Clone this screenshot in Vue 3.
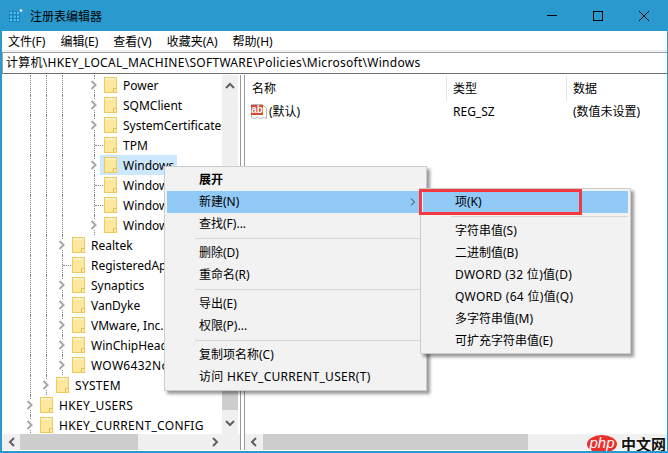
<template>
  <div class="window">
    <!-- title bar -->
    <div class="titlebar">
      <svg class="app-icon" width="14" height="15" viewBox="0 0 14 15">
        <g fill="#4fc3f7" stroke="#0f6fa8" stroke-width="0.6">
          <rect v-for="c in gridCells" :key="c.k" :x="c.x" :y="c.y" width="3" height="3" />
        </g>
        <circle cx="12" cy="2.5" r="2" fill="#bfe9fb" stroke="#0f6fa8" stroke-width="0.6" />
      </svg>
      <span class="title">注册表编辑器</span>
      <div class="controls">
        <svg width="12" height="12" viewBox="0 0 12 12"><path d="M1 5.5h10" stroke="#000" fill="none" /></svg>
        <svg width="12" height="12" viewBox="0 0 12 12"><rect x="1.5" y="1.5" width="9" height="9" stroke="#000" fill="none" /></svg>
        <svg width="12" height="12" viewBox="0 0 12 12"><path d="M1 1l10 10M11 1L1 11" stroke="#000" fill="none" /></svg>
      </div>
    </div>

    <!-- menu -->
    <div class="menubar">
      <span v-for="m in menus" :key="m">{{ m }}</span>
    </div>

    <!-- address -->
    <div class="address">计算机\HKEY_LOCAL_MACHINE\SOFTWARE\Policies\Microsoft\Windows</div>

    <div class="panes">
      <div class="left">
        <div class="left-top">
          <div class="tree">
            <div v-for="row in rows" :key="row.name" class="row">
              <span
                v-for="i in row.depth"
                :key="i"
                class="col"
                :class="{ guide: row.guides.includes(i - 1) }"
              ></span>
              <span class="col line" :class="{ leaf: !row.exp }">
                <svg v-if="row.exp" class="chev" width="8" height="10" viewBox="0 0 8 10">
                  <path d="M1.5 1l4 4-4 4" fill="none" stroke="#a6a6a6" stroke-width="2" />
                </svg>
              </span>
              <span class="node" :class="{ selected: row.selected, wide: row.wide }">
                <svg class="folder" width="13" height="16" viewBox="0 0 13 16">
                  <rect x="0.5" y="0.5" width="12" height="15" fill="#fce79e" stroke="#f0cb5c" />
                  <rect x="1" y="1" width="11" height="2" fill="#fdf0c0" />
                  <path d="M9.5 15.5v-4h3" fill="#fff3c4" stroke="#e8bd45" />
                </svg>
                <span>{{ row.name }}</span>
              </span>
            </div>
          </div>
          <div class="vscroll">
            <svg width="16" height="20" viewBox="0 0 16 20"><path d="M4 13l4-4 4 4" fill="none" stroke="#606060" stroke-width="2" /></svg>
            <div class="vtrack"><div class="vthumb"></div></div>
            <svg width="16" height="20" viewBox="0 0 16 20"><path d="M4 7l4 4 4-4" fill="none" stroke="#606060" stroke-width="2" /></svg>
          </div>
        </div>
        <div class="hscroll">
          <svg width="18" height="16" viewBox="0 0 18 16"><path d="M12 4L8 8l4 4" fill="none" stroke="#606060" stroke-width="2" /></svg>
          <div class="hthumb left-thumb"></div>
          <div class="spacer"></div>
          <svg width="18" height="16" viewBox="0 0 18 16"><path d="M7 4l4 4-4 4" fill="none" stroke="#606060" stroke-width="2" /></svg>
          <div class="corner"></div>
        </div>
      </div>

      <div class="splitter"></div>

      <div class="right">
        <div class="list-head">
          <span class="h-name">名称</span>
          <span class="h-type">类型</span>
          <span class="h-data">数据</span>
        </div>
        <div class="list-row">
          <span class="h-name cell-name">
            <svg width="16" height="17" viewBox="0 0 16 17">
              <path d="M0.5 1.5h11l4 4v10l-3-1-3 1-3-1-3 1-3-1z" fill="#fff" stroke="#b8b8b8" />
              <rect x="0" y="2" width="12" height="10" fill="#d9482b" />
              <text x="6" y="10" class="ab">ab</text>
            </svg>
            (默认)
          </span>
          <span class="h-type">REG_SZ</span>
          <span class="h-data">(数值未设置)</span>
        </div>
        <div class="list-fill"></div>
        <div class="hscroll">
          <svg width="18" height="16" viewBox="0 0 18 16"><path d="M11 4L7 8l4 4" fill="none" stroke="#606060" stroke-width="2" /></svg>
          <div class="hthumb right-thumb"></div>
        </div>
      </div>
    </div>

    <!-- context menu -->
    <div class="menu main-menu">
      <template v-for="(it, i) in mainMenu" :key="i">
        <div v-if="it.sep" class="sep"></div>
        <div v-else class="item" :class="{ active: it.active, bold: it.bold, wide: it.wide }">
          {{ it.text }}
          <svg v-if="it.active" class="sub-arrow" width="6" height="8" viewBox="0 0 6 8">
            <path d="M1 0.5l3.5 3.5L1 7.5" fill="none" stroke="#404040" />
          </svg>
        </div>
      </template>
    </div>

    <div class="menu sub-menu">
      <template v-for="(it, i) in subMenu" :key="i">
        <div v-if="it.sep" class="sep"></div>
        <div v-else class="item" :class="{ active: it.active, wide: it.wide }">{{ it.text }}</div>
      </template>
    </div>
    <div class="red-box"></div>

    <!-- watermark -->
    <div class="watermark">
      <span class="php">php</span>
      <span class="cn">中文网</span>
    </div>
  </div>
</template>

<script setup>
const menus = ["文件(F)", "编辑(E)", "查看(V)", "收藏夹(A)", "帮助(H)"];

const gridCells = [];
for (let y = 0; y < 3; y++) {
  for (let x = 0; x < 3; x++) {
    gridCells.push({ k: `${x}-${y}`, x: 0.5 + x * 3.6, y: 3.5 + y * 3.6 });
  }
}

const deep = [1, 2, 3];
const mid = [1, 2];
const rows = [
  { name: "Power", depth: 5, guides: deep, exp: true },
  { name: "SQMClient", depth: 5, guides: deep, exp: true },
  { name: "SystemCertificates", depth: 5, guides: deep, exp: true },
  { name: "TPM", depth: 5, guides: deep },
  { name: "Windows", depth: 5, guides: deep, exp: true, selected: true },
  { name: "Windows Defender", depth: 5, guides: deep },
  { name: "Windows Firewall", depth: 5, guides: deep },
  { name: "Windows NT", depth: 5, guides: deep, exp: true },
  { name: "Realtek", depth: 3, guides: mid, exp: true },
  { name: "RegisteredApplications", depth: 3, guides: mid },
  { name: "Synaptics", depth: 3, guides: mid, exp: true },
  { name: "VanDyke", depth: 3, guides: mid, exp: true },
  { name: "VMware, Inc.", depth: 3, guides: mid, exp: true },
  { name: "WinChipHead", depth: 3, guides: mid, exp: true },
  { name: "WOW6432Node", depth: 3, guides: mid, exp: true, wide: true },
  { name: "SYSTEM", depth: 2, guides: [1], exp: true, wide: true },
  { name: "HKEY_USERS", depth: 1, guides: [], exp: true, wide: true },
  { name: "HKEY_CURRENT_CONFIG", depth: 1, guides: [], exp: true, wide: true },
];

const mainMenu = [
  { text: "展开", bold: true },
  { text: "新建(N)", active: true },
  { text: "查找(F)..." },
  { sep: true },
  { text: "删除(D)" },
  { text: "重命名(R)" },
  { sep: true },
  { text: "导出(E)" },
  { text: "权限(P)..." },
  { sep: true },
  { text: "复制项名称(C)" },
  { text: "访问 HKEY_CURRENT_USER(T)", wide: true },
];

const subMenu = [
  { text: "项(K)", active: true },
  { sep: true },
  { text: "字符串值(S)" },
  { text: "二进制值(B)" },
  { text: "DWORD (32 位)值(D)", wide: true },
  { text: "QWORD (64 位)值(Q)", wide: true },
  { text: "多字符串值(M)" },
  { text: "可扩充字符串值(E)" },
];
</script>

<style>
html,
body {
  margin: 0;
  background: #fff;
}
</style>

<style scoped>
.window {
  position: relative;
  width: 668px;
  height: 453px;
  box-sizing: border-box;
  display: flex;
  flex-direction: column;
  overflow: hidden;
  background: #fff;
  border-left: 2px solid #2a9ace;
  border-right: 1px solid #2a9ace;
  border-bottom: 2px solid #2a9ace;
  font-family: "Noto Sans", "Noto Sans CJK SC", sans-serif;
  font-size: 12px;
  color: #000;
}

.titlebar {
  height: 31px;
  flex: none;
  margin-left: -2px;
  margin-right: -1px;
  padding-left: 9px;
  display: flex;
  align-items: center;
  background: #2a9ace;
}

.app-icon {
  margin-right: 7px;
}

.title {
  font-size: 12px;
}

.controls {
  margin-left: auto;
  padding-right: 18px;
  display: flex;
  gap: 34px;
}

.menubar {
  height: 19px;
  flex: none;
  padding-left: 6px;
  display: flex;
  align-items: center;
  gap: 15px;
}

.address {
  height: 22px;
  flex: none;
  box-sizing: border-box;
  margin-top: 2px;
  padding-left: 3px;
  line-height: 20px;
  letter-spacing: 0.28px;
  border: 1px solid #a0a0a0;
  border-bottom-color: #707070;
  border-right: none;
  box-shadow: 0 -2px 0 #f0f0f0;
  white-space: nowrap;
}

.panes {
  flex: 1;
  min-height: 0;
  display: flex;
  padding-top: 1px;
  padding-bottom: 1px;
}

.left {
  width: 238px;
  flex: none;
  display: flex;
  flex-direction: column;
}

.left-top {
  flex: 1;
  min-height: 0;
  display: flex;
}

.tree {
  width: 220px;
  flex: none;
  padding-left: 4px;
  box-sizing: border-box;
  overflow: hidden;
}

.row {
  height: 20px;
  display: flex;
  align-items: center;
  white-space: nowrap;
}

.col {
  position: relative;
  width: 16px;
  height: 20px;
  flex: none;
}

.guide::before,
.line::before {
  content: "";
  position: absolute;
  left: 8px;
  top: 0;
  bottom: 0;
  border-left: 1px dotted #808080;
}

.leaf::after {
  content: "";
  position: absolute;
  left: 9px;
  right: -1px;
  top: 10px;
  border-top: 1px dotted #808080;
}

.chev {
  position: absolute;
  left: 4px;
  top: 5px;
  background: #fff;
}

.node {
  display: flex;
  align-items: center;
  gap: 6px;
  height: 20px;
  padding: 0 3px 0 2px;
}

.node.selected {
  margin-left: -2px;
  padding-left: 4px;
  background: #cce8ff;
}

.node.wide {
  letter-spacing: 0.3px;
}

.folder {
  flex: none;
}

.vscroll {
  width: 16px;
  flex: none;
  display: flex;
  flex-direction: column;
  background: #f0f0f0;
}

.vtrack {
  flex: 1;
  padding-top: 85px;
  padding-bottom: 4px;
  display: flex;
}

.vthumb {
  flex: 1;
  background: #cdcdcd;
}

.hscroll {
  height: 16px;
  flex: none;
  display: flex;
  align-items: stretch;
  background: #f0f0f0;
}

.left-thumb {
  width: 118px;
}

.hthumb {
  background: #cdcdcd;
}

.spacer {
  flex: 1;
}

.corner {
  width: 16px;
  background: #f0f0f0;
}

.splitter {
  width: 5px;
  box-sizing: border-box;
  flex: none;
  border-left: 1px solid #9a9a9a;
  border-right: 1px solid #9a9a9a;
}

.right {
  flex: 1;
  min-width: 0;
  display: flex;
  flex-direction: column;
}

.list-head {
  height: 25px;
  flex: none;
  display: flex;
  align-items: center;
}

.list-row {
  height: 22px;
  flex: none;
  display: flex;
  align-items: center;
}

.h-name {
  width: 201px;
  padding-left: 7px;
  box-sizing: border-box;
}

.h-type {
  width: 120px;
  padding-left: 7px;
  box-sizing: border-box;
  position: relative;
}

.h-data {
  padding-left: 7px;
  position: relative;
}

.list-head .h-type::before,
.list-head .h-data::before {
  content: "";
  position: absolute;
  left: 0;
  top: -3px;
  bottom: -4px;
  border-left: 1px solid #e5e5e5;
}

.cell-name {
  display: flex;
  align-items: center;
  gap: 2px;
  padding-left: 6px;
}

.ab {
  font-size: 10px;
  font-weight: 700;
  fill: #fff;
  text-anchor: middle;
  font-family: "Liberation Sans", sans-serif;
}

.list-fill {
  flex: 1;
}

.right-thumb {
  width: 265px;
}

.menu {
  position: absolute;
  box-sizing: border-box;
  background: #f2f2f2;
  border: 1px solid #cccccc;
  box-shadow: 3px 3px 3px rgba(0, 0, 0, 0.4);
  white-space: nowrap;
}

.main-menu {
  left: 162px;
  top: 166px;
  width: 263px;
  height: 225px;
  padding: 2px 2px 1px;
}

.sub-menu {
  left: 418px;
  top: 188px;
  width: 211px;
  height: 166px;
  padding: 2px;
}

.item {
  position: relative;
  height: 22px;
  line-height: 22px;
  padding-left: 32px;
}

.item.bold {
  font-weight: 700;
}

.item.wide {
  letter-spacing: 0.3px;
}

.item.active {
  background: #91c9f7;
}

.sep {
  height: 1px;
  margin: 3px 0 3px 28px;
  background: #d7d7d7;
}

.sub-arrow {
  position: absolute;
  left: 243px;
  top: 7px;
}

.red-box {
  position: absolute;
  left: 417px;
  top: 189px;
  width: 163px;
  height: 26px;
  box-sizing: border-box;
  border: 3px solid #f43a3f;
}

.watermark {
  position: absolute;
  left: 585px;
  top: 435px;
  height: 18px;
  display: flex;
  align-items: center;
  gap: 4px;
  white-space: nowrap;
}

.php {
  width: 30px;
  height: 18px;
  flex: none;
  line-height: 16px;
  text-align: center;
  border-radius: 50%;
  background: #e8302c;
  color: #fff;
  font-family: "Liberation Sans", sans-serif;
  font-style: italic;
  font-size: 15px;
}

.cn {
  font-size: 15px;
  line-height: 18px;
  font-weight: 700;
  color: #111;
  text-shadow: 0 0 2px #fff, 0 0 2px #fff;
}
</style>
